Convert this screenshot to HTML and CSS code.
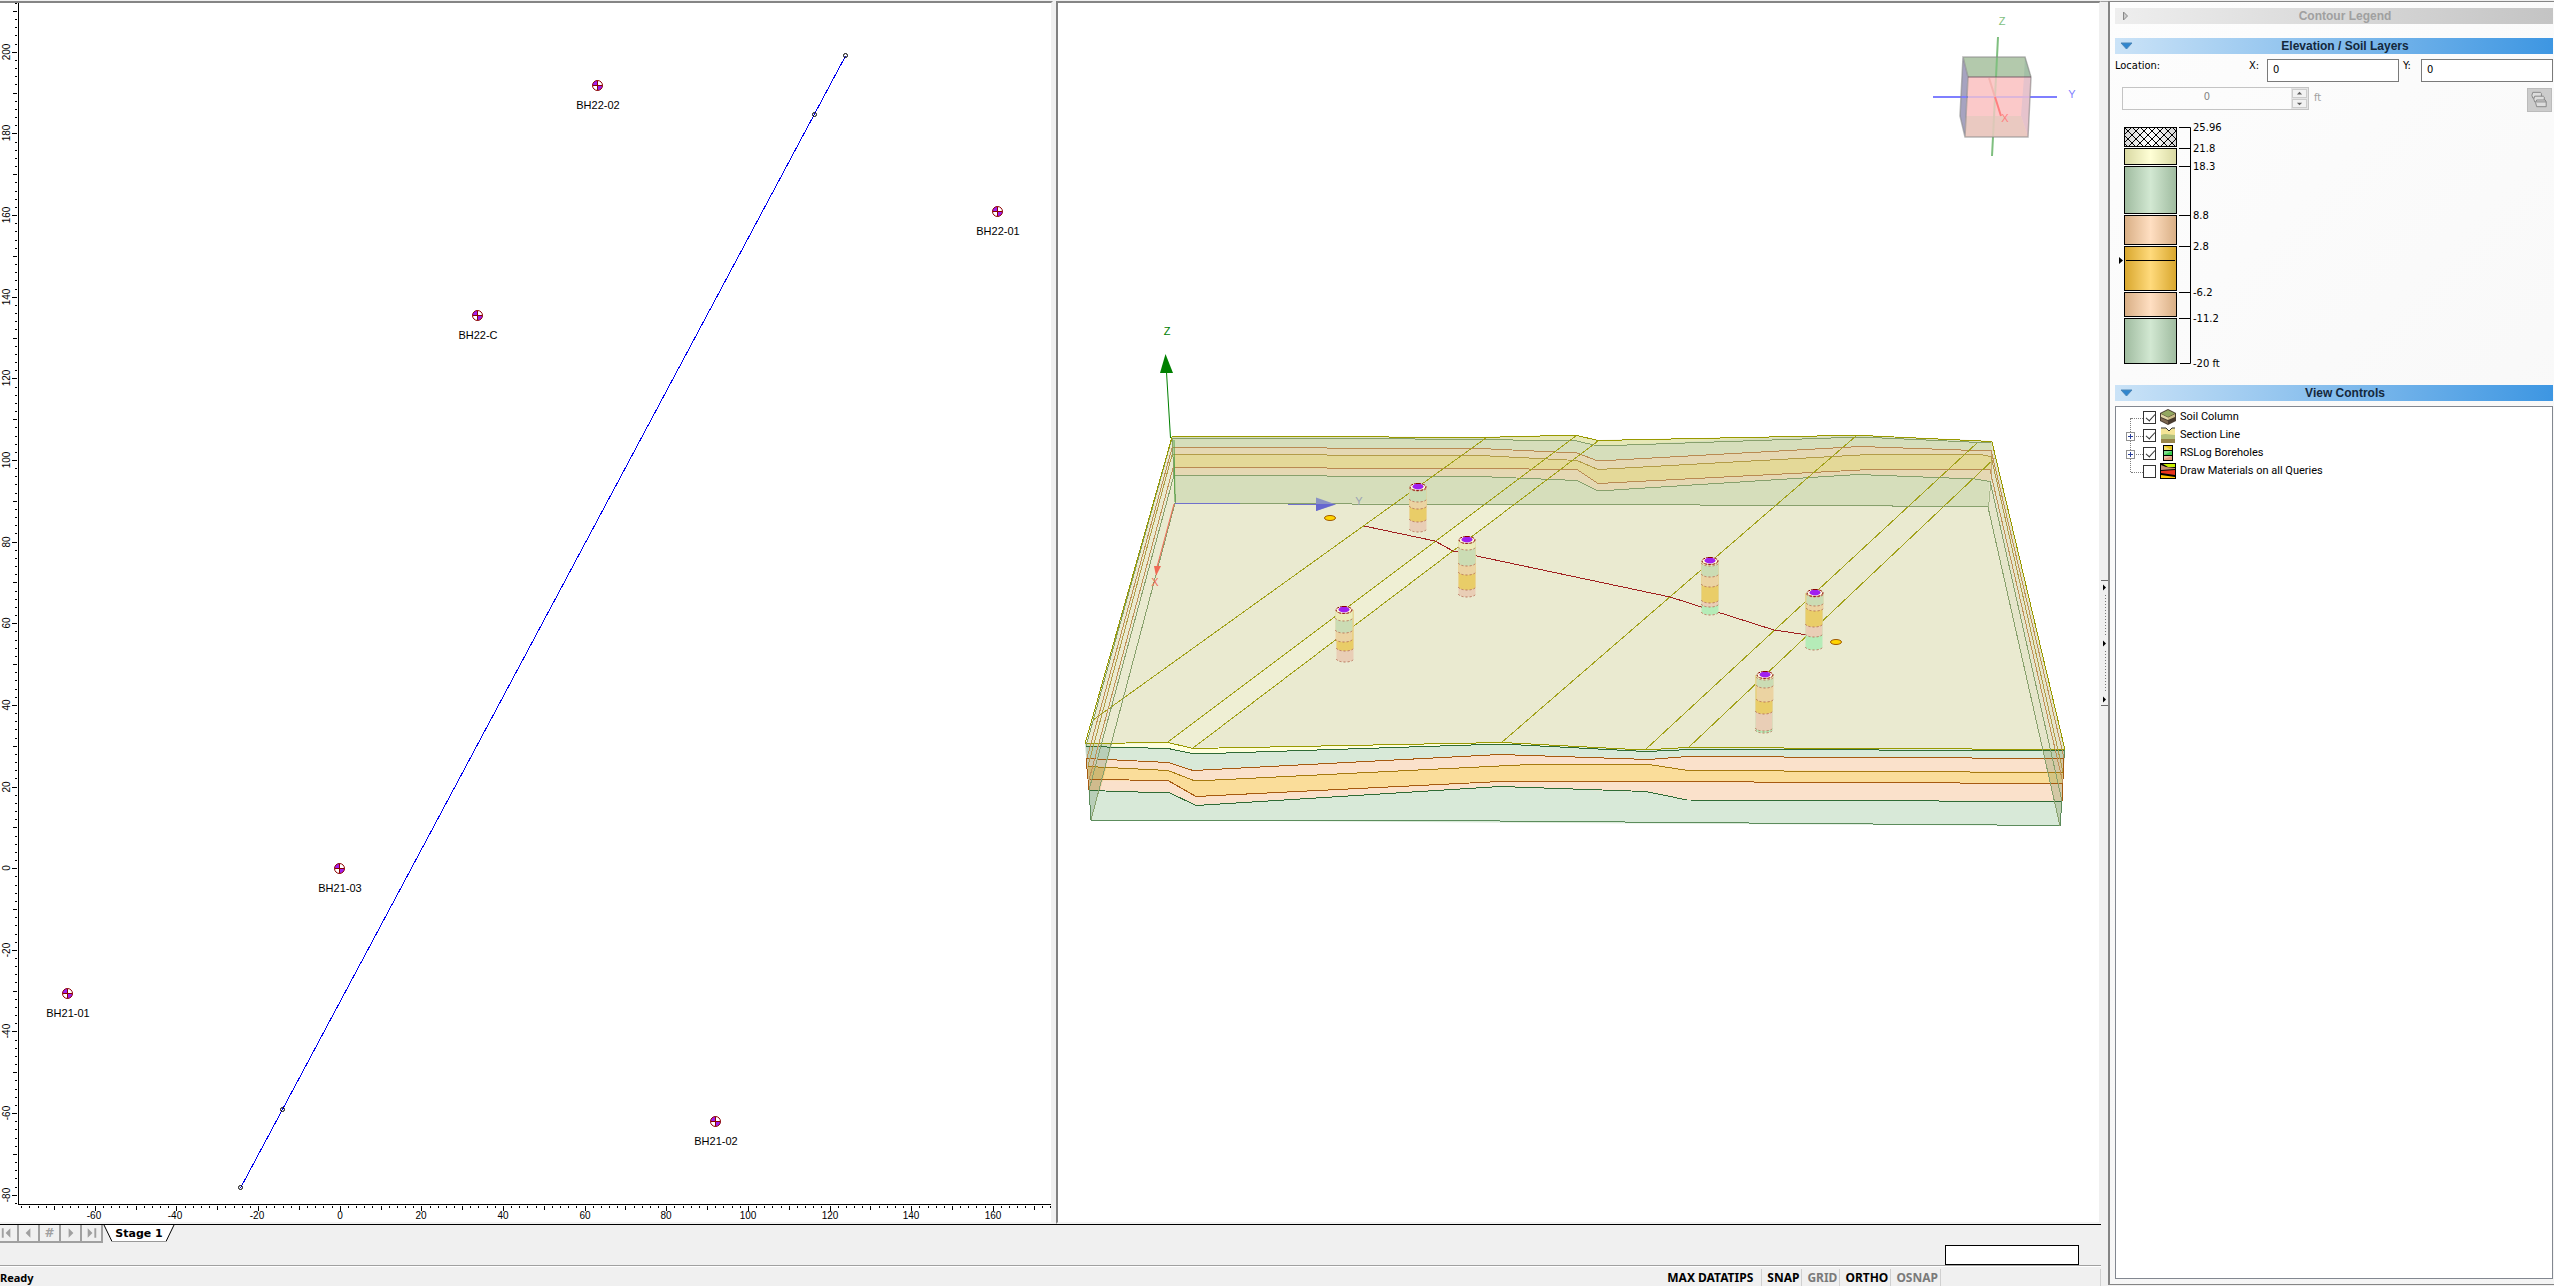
FILE: index.html
```html
<!DOCTYPE html>
<html lang="en">
<head>
<meta charset="utf-8">
<title>Stage 1</title>
<link rel="stylesheet" href="styles.css">
</head>
<body>
<div class="app">
  <div class="workspace">
    <div class="views">
      <section class="view" aria-label="Plan view">
        <svg class="drawing" viewBox="0 3 1051 1219">
          <defs>
            <g id="hole">
              <circle r="5" fill="#fff"/>
              <path d="M0 0V-5A5 5 0 0 0 -5 0ZM0 0V5A5 5 0 0 0 5 0Z" fill="#a020f0"/>
              <circle r="5" fill="none" stroke="#8b0000"/>
              <path d="M-5 0H5M0 -5V5" stroke="#8b0000"/>
            </g>
            <circle id="node" r="2" fill="none" stroke="#000"/>
          </defs>
          <g class="crisp">
            <path d="M18.500 3V1204.500H1051" fill="none" stroke="#000"/>
            <path id="ticks" fill="none" stroke="#000"/>
          </g>
          <g id="ruler-labels" class="ruler-text"></g>
          <path class="crisp" d="M845.500 56L240.500 1188" stroke="#0000f0" fill="none"/>
          <use href="#node" x="845.500" y="55.500"/>
          <use href="#node" x="814.500" y="114.500"/>
          <use href="#node" x="282.500" y="1109.500"/>
          <use href="#node" x="240.500" y="1187.500"/>
          <g class="hole-text">
            <use href="#hole" x="597.500" y="85.500"/><text x="598" y="109">BH22-02</text>
            <use href="#hole" x="997.500" y="211.500"/><text x="998" y="235">BH22-01</text>
            <use href="#hole" x="477.500" y="315.500"/><text x="478" y="339">BH22-C</text>
            <use href="#hole" x="339.500" y="868.500"/><text x="340" y="892">BH21-03</text>
            <use href="#hole" x="67.500" y="993.500"/><text x="68" y="1017">BH21-01</text>
            <use href="#hole" x="715.500" y="1121.500"/><text x="716" y="1145">BH21-02</text>
          </g>
        </svg>
      </section>
      <section class="view view-3d" aria-label="3D view">
        <svg class="drawing" viewBox="1058 3 1041 1219">
          <!-- translucent block: top surface and sides -->
          <path d="M1172 436L1480 437L1576 435L1598 440L1860 435L1992 441L2065 750L1687 748L1644 750L1502 743L1193 748L1168 742L1086 744Z" fill="#eaead0"/>
          <path d="M1576 435L1598 440L1193 748L1168 742Z" fill="#efefd4"/>
          <!-- rear face -->
          <path d="M1172 437L1480 438L1577 436L1598 441L1860 436L1992 442L1988 507L1700 505L1175 503Z" fill="#d6debb"/>
          <path d="M1560 436L1577 436L1598 441L1780 437L1598 446L1577 441L1480 439Z" fill="#e6e8b6"/>
          <path d="M1173 448L1480 449L1577 453L1598 461L1860 446L1975 450L1991 450L1990 481L1975 479L1858 474L1598 491L1577 480L1480 477L1174 475Z" fill="#e5d8b3"/>
          <path d="M1173 455L1480 456L1577 461L1598 470L1860 455L1980 455L1991 456L1991 470L1860 470L1598 483L1577 470L1480 469L1173 468Z" fill="#e4d998"/>
          <g class="crisp" fill="none">
            <g stroke="#87a06c">
              <path d="M1172 438.500H1350L1480 439.500L1577 441L1598 446L1860 437L1991 443"/>
              <path d="M1174 475.500L1480 476.500L1577 480.500L1598 491L1858 474.500L1975 479L1990 481.500"/>
              <path d="M1175 503.500L1700 505L1988 506.500M1172 438L1175.500 503M1991 481L1988.500 507"/>
            </g>
            <g stroke="#b98a52">
              <path d="M1172 447.500L1480 448.500L1577 453L1598 461L1860 446.500L1975 450.500H1991"/>
              <path d="M1173 467.500L1480 468.500L1577 469.500L1598 483.500L1860 470L1991 469.500"/>
            </g>
            <path stroke="#b39c48" d="M1173 454.500L1480 455.500L1577 460.500L1598 469.500L1860 455L1980 454.500L1991 456.500"/>
            <path stroke="#999900" d="M1172 436.500H1298L1480 437.500L1560 435.500H1577L1598 440.500L1842 435.500H1862L1992 441.500"/>
            <path stroke="#b98a52" d="M1991 450V480"/>
          </g>
          <!-- contact lines on the top surface -->
          <g class="crisp" fill="none" stroke="#a1a11a">
            <path d="M1486 438L1093 720M1576 436L1168 742M1598 441L1193 748M1856 436L1501 743M1977 443L1645 750M1995 458L1688 748"/>
          </g>
          <!-- front face -->
          <path d="M1086 744L1168 742L1193 748L1502 743L1644 750L1687 748L2065 750L2060 826L1091 820Z" fill="#d8e9d8"/>
          <path d="M1086 744L1168 743L1193 748L1502 743L1600 748L1502 744L1195 754L1168 748L1086 746Z" fill="#ffffdc"/>
          <path d="M1087 758L1168 762L1193 770L1500 754L1649 759L1688 757L2064 758L2062 801L1687 800L1646 792L1500 787L1196 805L1170 793L1089 790Z" fill="#fae1cb"/>
          <path d="M1088 766L1168 770L1195 781L1530 764H1649L1688 770L2063 772V783L1650 782H1500L1196 797L1168 781L1089 780Z" fill="#fadd9a"/>
          <path d="M1085 744L1112 744L1091 820Z" fill="#7d9d7d" opacity=".35"/>
          <path d="M1087 766L1106 768L1100 791L1089 790Z" fill="#d48a10" opacity=".22"/>
          <path d="M2043 750H2065L2060 826Z" fill="#7d8d50" opacity=".3"/>
          <path d="M1992 442L1988 507L2043 750H2065Z" fill="#dfdfc0" opacity=".4"/>
          <g class="crisp" fill="none">
            <g stroke="#2f6b35">
              <path d="M1086 746.500L1168 748.500L1195 754L1502 744L1646 751.500L1690 749.500L2064 750.500"/>
              <path d="M1089 790.500L1170 793L1196 805.500L1500 786.500L1646 791.500L1687 800L2062 801.500"/>
              <path stroke="#5c8c5c" d="M1091 820.500L1500 821L2059 825.500M1089 790L1091 820M2062 801L2060 826M2064 750V758"/>
            </g>
            <g stroke="#a65a10">
              <path d="M1086 758.500L1168 762.500L1193 770.500L1500 754.500L1649 759.500L1688 756.500L2064 758.500"/>
              <path d="M1089 779.500L1168 780.500L1196 796.500L1500 781.500H1650L2063 783.500"/>
              <path d="M1086 758L1089 790M2064 758L2062 801"/>
            </g>
            <path stroke="#a67a10" d="M1088 766.500L1168 770.500L1195 781L1530 764.500H1649L1688 770.500L2063 772.500"/>
            <path stroke="#999900" d="M1085 743.500L1168 742.500L1193 748.500L1502 742.500L1644 750L1687 747.500L2065 749.500"/>
            <!-- side edges -->
            <g stroke="#c09058">
              <path d="M1172 448L1087 758M1173 468L1089 780M1991 450L2064 758M1990 470L2063 783"/>
            </g>
            <path stroke="#b39c48" d="M1172 455L1088 766M1991 456L2063 772"/>
            <path stroke="#87a06c" d="M1174 475L1089 790M1175 503L1091 820M1990 481L2062 801M1988 507L2060 826M1172 438L1086 746"/>
            <path stroke="#999900" d="M1172 437L1085 744M1992 442L2065 750"/>
          </g>
          <!-- section line -->
          <path class="crisp" d="M1364 526L1435 541L1453 551L1670 597L1774 630L1808 635" stroke="#a02020" fill="none"/>
          <g fill="#ffd400" stroke="#a05a00">
            <ellipse cx="1330" cy="518" rx="5.500" ry="2.500"/>
            <ellipse cx="1836" cy="642" rx="5.500" ry="2.500"/>
          </g>
          <g id="boreholes-3d"></g>
          <!-- axes -->
          <path d="M1170.500 438L1166.500 372" stroke="#008000"/>
          <path d="M1165.500 354L1173 373H1160Z" fill="#008000"/>
          <path d="M1174 440L1175 502" stroke="#5aa84a"/>
          <path d="M1175 503.500H1240M1288 504.500H1318" stroke="#7070cc"/>
          <path d="M1316 497.500L1336 504.500L1316 511Z" fill="#8a92c4"/>
          <path d="M1316 504H1336L1316 511Z" fill="#6666d0"/>
          <path d="M1174 504L1157 567" stroke="#f06a55"/>
          <path d="M1154 566H1161L1156 576Z" fill="#f06a55"/>
          <g class="axis-text">
            <text x="1167" y="335" fill="#008000">Z</text>
            <text x="1359" y="505" fill="#9aa2b4">Y</text>
            <text x="1155" y="586" fill="#f06a55">X</text>
          </g>
          <!-- orientation cube -->
          <g stroke-width="2">
            <path d="M1963 57H2025L2031 77H1968Z" fill="#b3c9ac"/>
            <path d="M2025 57L2031 77H2024Z" fill="#a3bfa6"/>
            <path d="M1963 57L1968 77L1965 137L1960 116Z" fill="#a6a3c0"/>
            <path d="M1968 77H2031L2028 137H1965Z" fill="#fbc9c9"/>
            <path d="M2024 77H2031L2028 137L2021 116Z" fill="#e6c3cc"/>
            <path d="M1966 116H2021L2028 137H1965Z" fill="#eac9c1"/>
            <path d="M1998 37L1996 77M1993 137L1992 156" stroke="#7fbf7f"/>
            <path d="M1996 77L1993 137" stroke="#dcc8b8"/>
            <path d="M1933 97H1968M2030 97H2057" stroke="#7f7fff"/>
            <path d="M1968 97H2030" stroke="#dcb6da"/>
            <path d="M1989 78L1995 97" stroke="#f4b4b0"/>
            <path d="M1995 97L2001 116" stroke="#ff7f7f"/>
            <g fill="none" stroke="#8a8a8a" stroke-opacity=".6" stroke-width="1.500">
              <path d="M1968 77L1963 57H2025L2031 77L2028 137H1965L1960 116L1963 57M1968 77L1965 137"/>
              <path d="M1968 77H2031" stroke="#705060"/>
            </g>
          </g>
          <g class="axis-text">
            <text x="2002" y="25" fill="#7fbf7f">Z</text>
            <text x="2072" y="98" fill="#7f7fff">Y</text>
            <text x="2005" y="122" fill="#ff7f7f">X</text>
          </g>
        </svg>
      </section>
    </div>
    <div class="tabbar">
      <nav class="stage-nav" aria-label="Stages">
        <button type="button" aria-label="First stage" disabled><svg viewBox="0 0 20 16"><path d="M4 3h2v10H4zM13 3v10L8 8z"/></svg></button>
        <button type="button" aria-label="Previous stage" disabled><svg viewBox="0 0 20 16"><path d="M12 3v10L7 8z"/></svg></button>
        <button type="button" aria-label="Go to stage" disabled>#</button>
        <button type="button" aria-label="Next stage" disabled><svg viewBox="0 0 20 16"><path d="M8 3v10l5-5z"/></svg></button>
        <button type="button" aria-label="Last stage" disabled><svg viewBox="0 0 20 16"><path d="M6 3v10l5-5zM13 3h2v10h-2z"/></svg></button>
      </nav>
      <button type="button" class="stage-tab">
        <svg class="tab-shape" viewBox="0 0 72 18"><path d="M1 0L9 16.500H63L71 0" fill="#fff"/><path d="M1 0L9 16.500M63 16.500L71 0" fill="none" stroke="#000"/><path d="M9 16.500H63" stroke="#999"/></svg>
        <span>Stage 1</span>
      </button>
      <input class="coord-box" type="text" aria-label="Coordinates">
    </div>
    <footer class="status">
      <span class="status-ready">Ready</span>
      <button type="button" class="cell">MAX DATATIPS</button>
      <button type="button" class="cell">SNAP</button>
      <button type="button" class="cell off">GRID</button>
      <button type="button" class="cell">ORTHO</button>
      <button type="button" class="cell off">OSNAP</button>
      <span class="status-end"></span>
    </footer>
  </div>
  <div class="splitter">
    <svg class="grip" viewBox="0 0 7 126">
      <path d="M0 .500H7M0 125.500H7" stroke="#696969"/>
      <path d="M2 4.500v6l3-3zM2 60.500v6l3-3zM2 116.500v6l3-3z"/>
      <path d="M4.500 15V56M4.500 71V112" stroke="#777" stroke-dasharray="1 2"/>
    </svg>
  </div>
  <aside class="side">
    <button type="button" class="bar bar-off"><svg viewBox="0 0 24 16"><path d="M8.500 4v8l4-4z" fill="#ccc" stroke="#888"/></svg><span>Contour Legend</span></button>
    <button type="button" class="bar"><svg viewBox="0 0 24 16"><path d="M6 5h11l-5.500 6z" fill="#2f86cf" stroke="#4a86b8"/></svg><span>Elevation / Soil Layers</span></button>
    <div class="location">
      <span class="location-title">Location:</span>
      <label for="loc-x">X:</label><input id="loc-x" type="text" value="0">
      <label for="loc-y" class="label-y">Y:</label><input id="loc-y" type="text" value="0">
    </div>
    <div class="depth">
      <div class="spin">
        <input id="depth" type="text" value="0" disabled>
        <div class="spin-buttons">
          <button type="button" aria-label="Increase" disabled><svg viewBox="0 0 14 8"><path d="M7 2l3 3H4z"/></svg></button>
          <button type="button" aria-label="Decrease" disabled><svg viewBox="0 0 14 8"><path d="M7 6l3-3H4z"/></svg></button>
        </div>
      </div>
      <label for="depth">ft</label>
      <button type="button" class="layers" aria-label="Layers" disabled>
        <svg viewBox="0 0 23 23"><g fill="#ddd" stroke="#858585"><path d="M3.500 6.500l1-3h8l1 1v5h-9z"/><path d="M5.500 10.500l1-3h9l1 1v5h-10z"/><path d="M7.500 14.500l1-3h9l1 2v5h-10z"/><path d="M8.500 13.500h10"/></g></svg>
      </button>
    </div>
    <svg class="column" viewBox="2115 112 438 273">
      <defs>
        <linearGradient id="g-yellow"><stop offset="0" stop-color="#d8d8a2"/><stop offset=".5" stop-color="#ffffd6"/><stop offset="1" stop-color="#d8d8a2"/></linearGradient>
        <linearGradient id="g-green"><stop offset="0" stop-color="#9fbb9f"/><stop offset=".5" stop-color="#d2e8d2"/><stop offset="1" stop-color="#9fbb9f"/></linearGradient>
        <linearGradient id="g-peach"><stop offset="0" stop-color="#d8ae84"/><stop offset=".5" stop-color="#ffdfc2"/><stop offset="1" stop-color="#d8ae84"/></linearGradient>
        <linearGradient id="g-gold"><stop offset="0" stop-color="#d8a62c"/><stop offset=".5" stop-color="#ffda7c"/><stop offset="1" stop-color="#d8a62c"/></linearGradient>
        <linearGradient id="g-grey"><stop offset="0" stop-color="#d4d4d4"/><stop offset=".5" stop-color="#fff"/><stop offset="1" stop-color="#d4d4d4"/></linearGradient>
        <pattern id="hatch" width="8" height="8" x="2124" y="127" patternUnits="userSpaceOnUse"><path d="M0 0L8 8M8 0L0 8" stroke="#000"/></pattern>
      </defs>
      <g stroke="#000">
        <rect x="2124.500" y="127.500" width="52" height="19" fill="url(#g-grey)"/>
        <rect x="2124.500" y="127.500" width="52" height="19" fill="url(#hatch)"/>
        <rect x="2124.500" y="148.500" width="52" height="16" fill="url(#g-yellow)"/>
        <rect x="2124.500" y="166.500" width="52" height="47" fill="url(#g-green)"/>
        <rect x="2124.500" y="215.500" width="52" height="29" fill="url(#g-peach)"/>
        <rect x="2124.500" y="246.500" width="52" height="44" fill="url(#g-gold)"/>
        <rect x="2124.500" y="292.500" width="52" height="24" fill="url(#g-peach)"/>
        <rect x="2124.500" y="318.500" width="52" height="45" fill="url(#g-green)"/>
        <path d="M2126 260.500H2175"/>
        <path d="M2179 127.500H2190.500V363.500H2180M2179 148.500H2190M2179 166.500H2190M2179 215.500H2190M2179 246.500H2190M2179 292.500H2190M2179 318.500H2190" fill="none"/>
      </g>
      <path d="M2119 257V264L2123 260.500Z"/>
      <g class="column-text">
        <text x="2193" y="131">25.96</text>
        <text x="2193" y="152">21.8</text>
        <text x="2193" y="170">18.3</text>
        <text x="2193" y="219">8.8</text>
        <text x="2193" y="250">2.8</text>
        <text x="2193" y="296">-6.2</text>
        <text x="2193" y="322">-11.2</text>
        <text x="2193" y="367">-20 ft</text>
      </g>
    </svg>
    <button type="button" class="bar"><svg viewBox="0 0 24 16"><path d="M6 5h11l-5.500 6z" fill="#2f86cf" stroke="#4a86b8"/></svg><span>View Controls</span></button>
    <ul class="tree">
      <li>
        <span class="twig"></span>
        <label><input type="checkbox" checked>
          <svg viewBox="0 0 16 16"><path d="M8 0L16 4V12L8 16L0 12V4Z" fill="#4a3c30"/><path d="M8 1L15 4.500L8 8L1 4.500Z" fill="#93a860"/><path d="M1 5L8 8.500V11L1 8Z" fill="#e3d7a8"/><path d="M15 5L8 8.500V11L15 8Z" fill="#cdbd88"/><path d="M1 9L8 12V15L1 11.500Z" fill="#7c6650"/></svg>
          Soil Column</label>
      </li>
      <li>
        <button type="button" class="twig expander" aria-label="Expand"></button>
        <label><input type="checkbox" checked>
          <svg viewBox="0 0 16 16"><path d="M1 1H6L9 4L12 1H15V16H1Z" fill="#f4e496"/><path d="M1 8C6 6 9 8 15 8V13H1Z" fill="#b4c07c"/><path d="M1 12H15V16H1Z" fill="#97854a"/><path d="M1 1H6L9 4L12 1H15" fill="none" stroke="#333"/></svg>
          Section Line</label>
      </li>
      <li>
        <button type="button" class="twig expander" aria-label="Expand"></button>
        <label><input type="checkbox" checked>
          <svg viewBox="0 0 16 16"><path d="M3 0H13V16H3Z"/><path d="M4 1H12V5H4Z" fill="#e6c619"/><path d="M4 6H12V10H4Z" fill="#38c94c"/><path d="M4 11H12V15H4Z" fill="#e59a7c"/><path d="M4 5V1L12 5ZM4 10L12 6H4ZM4 11H12L4 14Z" fill="#fff" opacity=".35"/></svg>
          RSLog Boreholes</label>
      </li>
      <li>
        <span class="twig"></span>
        <label><input type="checkbox">
          <svg viewBox="0 0 16 16"><path d="M0 0H16V16H0Z"/><path d="M3 1H15V4H8Z" fill="#c8f000"/><path d="M1 2L6 4L15 5V6L1 7Z" fill="#c09070"/><path d="M1 8L15 7V12L1 10Z" fill="#e8341c"/><path d="M1 12L15 14V15H1Z" fill="#ffc800"/></svg>
          Draw Materials on all Queries</label>
      </li>
    </ul>
  </aside>
</div>
<script src="drawing.js"></script>
</body>
</html>
```
FILE: drawing.js
```javascript
const NS = "http://www.w3.org/2000/svg";

function add(parent, tag, attrs, text) {
  const node = document.createElementNS(NS, tag);
  for (const key in attrs) node.setAttribute(key, attrs[key]);
  if (text !== undefined) node.textContent = text;
  parent.appendChild(node);
  return node;
}

// Rulers: world units to drawing units
const SCALE = 4.082;
const toX = (v) => 340.2 + v * SCALE;
const toY = (v) => 868.7 - v * SCALE;
const tickLength = (v, sizes) => (v % 20 === 0 ? sizes[2] : v % 10 === 0 ? sizes[1] : sizes[0]);
const labels = document.getElementById("ruler-labels");
let ticks = "";

for (let v = -78; v <= 174; v += 2) {
  const x = Math.floor(toX(v)) + 0.5;
  if (x < 20 || x > 1051) continue;
  ticks += `M${x} 1206v${tickLength(v, [2, 4, 5])}`;
  if (v % 20 === 0) add(labels, "text", { x: Math.floor(x) - (v < 0 ? 1 : 0), y: 1219 }, v);
}
for (let v = -82; v <= 212; v += 2) {
  const y = Math.floor(toY(v)) + 0.5;
  if (y < 3 || y > 1204) continue;
  ticks += `M17 ${y}h-${tickLength(v, [2, 4, 5])}`;
  if (v % 20 === 0) {
    add(labels, "text", { transform: `translate(10 ${Math.floor(y)}) rotate(-90)` }, v);
  }
}
document.getElementById("ticks").setAttribute("d", ticks);

// Boreholes in the 3D view: centre at top and bottom, then the depth of each contact
const COLORS = ["#ecebb8", "#cbdcb4", "#ebd3a2", "#e9cd68", "#e9ceb6", "#b5ecb8"];
const HOLES = [
  { x: 1418, end: 1418, top: 487, stops: [490, 501, 508, 521, 531] },
  { x: 1467, end: 1467, top: 540, stops: [549, 565, 574, 589, 596] },
  { x: 1344, end: 1345, top: 610, stops: [620, 632, 641, 650, 661] },
  { x: 1710, end: 1710, top: 561, stops: [565, 576, 586, 602, 606, 614] },
  { x: 1815, end: 1814, top: 593, stops: [596, 605, 610, 626, 636, 649] },
  { x: 1765, end: 1764, top: 675, stops: [679, 687, 701, 713, 730, 732] },
];
const group = document.getElementById("boreholes-3d");
for (const hole of HOLES) {
  const last = hole.stops.length - 1;
  for (let i = last; i >= 0; i--) {
    const x = i > last / 2 ? hole.end : hole.x;
    const y = hole.stops[i] - 2;
    add(group, "path", {
      d: `M${x - 8.5} ${hole.top}V${y}A8.5 3 0 0 0 ${x + 8.5} ${y}V${hole.top}Z`,
      fill: COLORS[i],
    });
    add(group, "path", {
      d: `M${x - 8.5} ${y}A8.5 3 0 0 0 ${x + 8.5} ${y}`,
      fill: "none", stroke: "#b8735a", "stroke-dasharray": "2 2",
    });
  }
  add(group, "ellipse", { cx: hole.x, cy: hole.top, rx: 8, ry: 3.5, fill: "#ffffdc", stroke: "#8b0000", "stroke-dasharray": "3 1" });
  add(group, "ellipse", { cx: hole.x, cy: hole.top - 0.5, rx: 5.5, ry: 3, fill: "#a020f0" });
  add(group, "path", { d: `M${hole.x - 2} ${hole.top - 3.5}h4`, stroke: "#8b0000" });
}
```
FILE: styles.css
```css
* { box-sizing: border-box; }
body {
  margin: 0;
  background: #f0f0f0;
  color: #000;
  font: 11px/14px "DejaVu Sans Condensed", "DejaVu Sans", sans-serif;
}
button, input { font: inherit; color: inherit; margin: 0; border-radius: 0; }
button { padding: 0; border: 0; background: none; }
svg { display: block; }
.crisp { shape-rendering: crispEdges; }

.app { display: flex; height: 100vh; }
.workspace { flex: 1; min-width: 0; display: flex; flex-direction: column; }

.views {
  flex: 1;
  min-height: 0;
  display: grid;
  grid-template-columns: minmax(0, 1053fr) minmax(0, 1045fr);
  gap: 3px;
  padding-top: 1px;
  border-bottom: 1px solid #000;
}
.view {
  min-height: 0;
  background: #fff;
  border-top: 2px solid #858585;
  border-right: 2px solid #f0f0f0;
  border-bottom: 2px solid #f4f4f4;
}
.view-3d { border-left: 2px solid #808080; }
.drawing { width: 100%; height: 100%; }
.ruler-text { font: 10px "Liberation Sans", sans-serif; text-anchor: middle; }
.hole-text { font: 11px "Liberation Sans", sans-serif; text-anchor: middle; }
.axis-text { font: 11px "Liberation Sans", sans-serif; text-anchor: middle; }
.column-text { font: 10px "DejaVu Sans", sans-serif; }

.tabbar { display: flex; height: 40px; }
.stage-nav { display: flex; height: 18px; margin-left: -2px; }
.stage-nav button {
  width: 21px;
  border: solid #a0a0a0;
  border-width: 0 2px 2px 0;
  color: #a0a0a0;
  font: bold 12px/16px "DejaVu Sans", sans-serif;
}
.stage-nav svg { width: 19px; height: 16px; fill: #a0a0a0; }
.stage-tab { position: relative; width: 72px; height: 18px; }
.stage-tab span { position: relative; font: bold 11px/16px "DejaVu Sans", sans-serif; }
.tab-shape { position: absolute; inset: 0; width: 72px; height: 18px; }
.coord-box {
  width: 134px;
  height: 20px;
  margin: 20px 22px 0 auto;
  border: 1px solid #000;
  background: #fff;
}

.status {
  display: flex;
  height: 21px;
  border-top: 1px solid #a0a0a0;
  box-shadow: inset 0 1px #fff;
  padding-top: 3px;
  font: bold 12px/18px "Noto Sans", sans-serif;
}
.status-ready { margin-right: auto; font-size: 11px; }
.cell { padding: 0 2px 0 5px; border-right: 1px solid #d0d0d0; white-space: nowrap; }
.cell:first-of-type { padding-right: 8px; }
.off { color: #7a7a7a; }
.status-end { width: 160px; border-right: 1px solid #d0d0d0; }

.splitter {
  width: 7px;
  border-top: 1px solid #f0f0f0;
  padding-top: 579px;
  box-shadow: inset 0 1px #a0a0a0;
}
.grip { width: 7px; height: 126px; }

.side {
  width: 446px;
  display: flex;
  flex-direction: column;
  margin-top: 1px;
  margin-bottom: 1px;
  padding: 6px 1px 5px 5px;
  border: solid #858585;
  border-width: 1px 0 1px 2px;
  background: linear-gradient(135deg, #fdfdfd, #f4f4f4);
}
.bar {
  display: grid;
  grid-template-columns: 22px 1fr;
  flex: none;
  height: 16px;
  background: linear-gradient(90deg, #cbe3f7, #3d96e2);
  color: #14283c;
  font: bold 12px/16px "Liberation Sans", sans-serif;
  text-align: center;
}
.bar svg { width: 24px; height: 16px; }
.bar-off {
  margin-bottom: 14px;
  background: linear-gradient(90deg, #eee, #c4c4c4);
  color: #a0a0a0;
}

.location { display: flex; margin-top: 5px; }
.location-title { width: 134px; }
.location label { width: 18px; }
.location .label-y { margin-left: 4px; }
.location input {
  flex: 1;
  min-width: 0;
  height: 23px;
  padding: 0 5px 3px;
  border: 1px solid #7a7a7a;
  background: #fff;
}

.depth { display: flex; height: 25px; margin-top: 5px; color: #a0a0a0; }
.spin { display: flex; width: 187px; height: 23px; margin-left: 7px; border: 1px solid #c4c4c4; }
.spin input {
  flex: 1;
  min-width: 0;
  padding: 0 0 3px;
  border: 0;
  background: none;
  color: #838383;
  text-align: center;
}
.spin-buttons { display: grid; gap: 1px; width: 17px; padding: 1px; background: #e4e4e4; }
.spin-buttons button { border: 1px solid #ccc; background: #f2f2f2; }
.spin-buttons svg { width: 13px; height: 7px; fill: #606060; }
.depth label { margin: 4px 0 0 5px; }
.layers { width: 25px; height: 24px; margin: 1px 1px 0 auto; border: 1px solid #bbb; background: #ccc; }
.layers svg { width: 23px; height: 22px; }
.column { width: 100%; height: auto; }

.tree {
  position: relative;
  flex: 1;
  margin: 5px 0 0;
  padding: 1px 0 0 10px;
  border: 1px solid #828790;
  background: #fff;
  font-family: Roboto, sans-serif;
  list-style: none;
}
.tree::before {
  content: "";
  position: absolute;
  left: 14px;
  top: 11px;
  height: 54px;
  border-left: 1px dotted #808080;
}
.tree li { position: relative; display: flex; align-items: center; height: 18px; }
.tree li::before {
  content: "";
  position: absolute;
  left: 5px;
  top: 10px;
  width: 12px;
  border-top: 1px dotted #808080;
}
.twig { position: relative; width: 9px; height: 9px; margin: 2px 8px 0 0; }
.expander {
  border: 1px solid #919191;
  background:
    linear-gradient(#2a3f9a, #2a3f9a) center / 5px 1px no-repeat,
    linear-gradient(#2a3f9a, #2a3f9a) center / 1px 5px no-repeat,
    #fff;
}
.tree label { display: flex; align-items: center; gap: 4px; white-space: nowrap; }
.tree label svg { width: 16px; height: 16px; }
.tree input {
  position: relative;
  appearance: none;
  width: 13px;
  height: 13px;
  border: 1px solid #333;
  background: #fff;
}
.tree input:checked::before {
  content: "";
  position: absolute;
  left: 4px;
  top: 0;
  width: 4px;
  height: 8px;
  border: solid #333;
  border-width: 0 1px 1px 0;
  transform: rotate(42deg);
}
```
